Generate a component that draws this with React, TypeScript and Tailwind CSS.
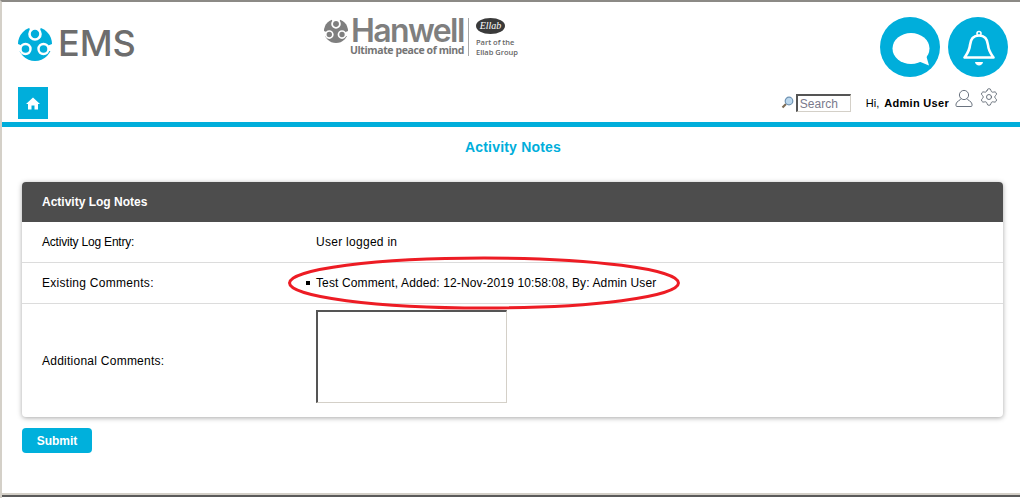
import React from 'react'
import { Settings } from 'lucide-react'

const LogoMark = ({ color, size }: { color: string; size: number }) => (
  <svg width={size} height={size} viewBox="0 0 34 34">
    <circle cx="17" cy="17" r="17" fill={color} />
    <path d="M11 0 L13 7 L21 7 L23 0 Z" fill="#fff" />
    <path d="M0 17 L5 19 L3 24 L0 24 Z M34 17 L29 19 L31 24 L34 24 Z" fill="#fff" />
    <circle cx="17" cy="7" r="5.5" fill={color} stroke="#fff" strokeWidth="2.6" />
    <circle cx="7.5" cy="22" r="5" fill={color} stroke="#fff" strokeWidth="2.4" />
    <circle cx="25.5" cy="22" r="5" fill={color} stroke="#fff" strokeWidth="2.4" />
  </svg>
)

const Row = ({ label, labelClass, children }: { label: string; labelClass: string; children: React.ReactNode }) => (
  <div className="flex items-center h-[41px] border-b border-b-[#dcdcdc]">
    <div className={`w-[294px] pl-5 shrink-0 ${labelClass}`}>{label}</div>
    <div>{children}</div>
  </div>
)

const App: React.FC = () => {
  return (
    <div className="relative w-[1020px] h-[498px] overflow-hidden bg-white border-l-2 border-l-[#d4d0c8] border-t-2 border-t-[#8c8a86] font-['Liberation_Sans',Arial,sans-serif] text-[12px] text-black">
      <div className="flex h-[85px]">
        <div className="flex items-start ml-4 mt-[25px] w-[306px]">
          <LogoMark color="#00aedb" size={34} />
          <span className="ml-[6px] -mt-[6px] font-['Inter',sans-serif] font-medium text-[36px] leading-[44px] text-[#6d6d6d]">EMS</span>
        </div>
        <div className="mt-[16px] flex items-start">
          <div className="w-[144px]">
            <div className="flex items-center h-[25px]">
              <LogoMark color="#7f7f7f" size={24} />
              <span className="ml-[3px] font-['Inter',sans-serif] font-semibold text-[32px] leading-[25px] tracking-[-1.6px] text-[#7f7f7f]">Hanwell</span>
            </div>
            <div className="ml-[26px] font-['Open_Sans',sans-serif] font-bold text-[10.5px] leading-[14px] tracking-[-0.4px] text-[#757575] whitespace-nowrap">Ultimate peace of mind</div>
          </div>
          <div className="w-px h-[38px] bg-[#a8a8a8]" />
          <div className="ml-[7px]">
            <div className="w-[29px] h-[16px] rounded-[50%] bg-[#3a3a3a] text-center font-['Liberation_Serif',serif] italic text-white text-[10px] leading-[16px]">Ellab</div>
            <div className="mt-[3px] font-['Open_Sans',sans-serif] font-semibold text-[7.5px] leading-[10px] text-[#666] whitespace-nowrap">Part of the<br />Ellab Group</div>
          </div>
        </div>
        <div className="ml-auto mr-[12px] mt-[15px] flex gap-2">
          <div className="w-[60px] h-[60px] rounded-full bg-[#00aedb]">
            <svg width="60" height="60" viewBox="0 0 60 60">
              <ellipse cx="31" cy="31.5" rx="18.5" ry="15.5" fill="#fff" />
              <path d="M38 44 L49 48.5 L46 38 Z" fill="#fff" />
            </svg>
          </div>
          <div className="w-[60px] h-[60px] rounded-full bg-[#00aedb]">
            <svg width="60" height="60" viewBox="0 0 60 60" fill="none" stroke="#fff" strokeWidth="2.6">
              <circle cx="31" cy="16.5" r="2" strokeWidth="1.6" />
              <path d="M31 18.5 C24.5 18.5 22.5 23 22 28 C21.5 34 19 37 16.5 40.5 H45.5 C43 37 40.5 34 40 28 C39.5 23 37.5 18.5 31 18.5 Z" strokeLinejoin="round" />
              <path d="M27 45 H35 C34.5 49.5 27.5 49.5 27 45 Z" fill="#fff" stroke="none" />
            </svg>
          </div>
        </div>
      </div>

      <div className="flex h-[35px]">
        <div className="ml-4 w-[30px] h-[32px] bg-[#00aedb] flex items-center justify-center">
          <svg width="14" height="13" viewBox="0 0 14 13" fill="#fff">
            <path d="M7 0.5 L14 7 H12 V12.5 H8.5 V8.5 H5.5 V12.5 H2 V7 H0 Z" />
          </svg>
        </div>
        <div className="ml-auto mr-[21px] flex items-start">
          <svg width="13" height="13" viewBox="0 0 13 13" className="mt-[9px] mr-[2px]">
            <line x1="1.5" y1="11.5" x2="5" y2="8" stroke="#7b6a55" strokeWidth="2.2" />
            <circle cx="8" cy="5" r="3.8" fill="#bcd8ee" stroke="#6f93b3" strokeWidth="1.2" />
          </svg>
          <input
            placeholder="Search"
            className="mt-[7px] w-[55px] h-[18px] px-[2px] border-t-2 border-l-2 border-r border-b border-t-[#555] border-l-[#555] border-r-[#d4d0c8] border-b-[#d4d0c8] text-[12px] leading-[14px] placeholder:text-[#7a7a8c] outline-none"
          />
          <span className="ml-[15px] mt-[9px] text-[11px] leading-[14px]">Hi,</span>
          <span className="ml-[5px] mt-[9px] text-[11px] leading-[14px] font-bold tracking-[0.3px]">Admin User</span>
          <svg width="18" height="18" viewBox="0 0 18 18" fill="none" stroke="#6b7480" strokeWidth="1" className="ml-[6px] mt-[2px]">
            <circle cx="9" cy="6" r="4.6" />
            <path d="M6 9.6 C5.5 11.5 1.5 12 1 15 V16.5 Q1 17.5 2 17.5 H16 Q17 17.5 17 16.5 V15 C16.5 12 12.5 11.5 12 9.6" />
          </svg>
          <Settings size={20} strokeWidth={1.1} className="ml-[6px] text-[#5f6873]" />
        </div>
      </div>

      <div className="h-[5px] bg-[#00aedb]" />

      <div className="pt-[11px] h-[55px] text-center text-[14px] leading-[18px] font-bold tracking-[0.2px] text-[#00aedb] pl-[4px]">Activity Notes</div>

      <div className="ml-5 w-[981px] h-[235px] bg-white rounded-[4px] shadow-[0_1px_5px_rgba(0,0,0,0.35)] overflow-hidden">
        <div className="h-10 pl-5 flex items-center bg-[#4d4d4d] text-white font-bold">Activity Log Notes</div>
        <Row label="Activity Log Entry:" labelClass="tracking-[-0.2px]">
          <span className="tracking-[0.28px]">User logged in</span>
        </Row>
        <Row label="Existing Comments:" labelClass="tracking-[0.28px]">
          <ul className="list-none">
            <li className="tracking-[0.12px]">
              <span className="inline-block w-[4px] h-[4px] bg-black -ml-[10px] mr-[6px] align-[2px]" />
              Test Comment, Added: 12-Nov-2019 10:58:08, By: Admin User
            </li>
          </ul>
        </Row>
        <div className="flex items-start h-[113px]">
          <div className="w-[294px] pl-5 shrink-0 mt-[48px] tracking-[0.25px]">Additional Comments:</div>
          <textarea className="mt-[6px] w-[191px] h-[93px] resize-none border-t-2 border-l-2 border-r border-b border-t-[#555] border-l-[#555] border-r-[#d4d0c8] border-b-[#d4d0c8] outline-none" />
        </div>
      </div>

      <button className="block ml-5 mt-[11px] w-[70px] h-[25px] rounded-[4px] bg-[#00b0dc] text-white font-bold text-[12px]">Submit</button>

      <svg width="396" height="56" viewBox="0 0 396 56" fill="none" className="absolute left-[284px] top-[253px]">
        <ellipse cx="198" cy="28" rx="194.5" ry="25" stroke="#ed1c24" strokeWidth="3" />
      </svg>

      <div className="absolute left-0 right-0 top-[491px] h-[2px] bg-[#d4d0c8]" />
      <div className="absolute left-0 right-0 top-[493px] h-[2px] bg-[#5a5a5a]" />
    </div>
  )
}

export default App
